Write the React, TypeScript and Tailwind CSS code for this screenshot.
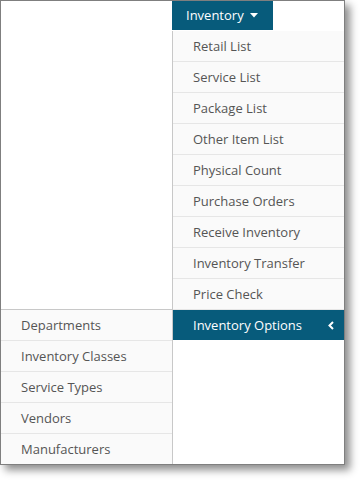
import React from "react";

const items = [
  "Retail List",
  "Service List",
  "Package List",
  "Other Item List",
  "Physical Count",
  "Purchase Orders",
  "Receive Inventory",
  "Inventory Transfer",
  "Price Check",
];

const subItems = ["Departments", "Inventory Classes", "Service Types", "Vendors", "Manufacturers"];

export default function App() {
  return (
    <div className="w-[361px] h-[481px] bg-white" style={{ fontFamily: '"Open Sans", "Liberation Sans", sans-serif' }}>
      <div className="w-[345px] h-[465px] border border-[#7f7f7f] bg-white shadow-[5px_5px_8px_rgba(0,0,0,0.45)] flex flex-col overflow-hidden">
        <div className="h-[30px] shrink-0 flex">
          <div className="w-[171px]" />
          <div className="w-[101px] h-[29px] bg-[#075b7b] text-white text-[13px] flex items-center pl-[14px] gap-[6px]">
            <span>Inventory</span>
            <svg width="8" height="5" viewBox="0 0 8 5">
              <path d="M0 0 L8 0 L4 4.5 Z" fill="white" />
            </svg>
          </div>
        </div>
        <div className="flex h-[433px]">
          <div className="w-[171px] flex flex-col justify-end">
            <div className="border-t border-[#c8c8c8] bg-[#fafafa]">
              {subItems.map((s, i) => (
                <div
                  key={s}
                  className={`h-[30px] box-content flex items-center pl-[20px] text-[13px] leading-none text-[#555] ${i < subItems.length - 1 ? "border-b border-[#e6e6e6]" : ""}`}
                >
                  {s}
                </div>
              ))}
            </div>
          </div>
          <div className="flex-1 border-l border-[#c8c8c8] bg-white">
            {items.map((s) => (
              <div key={s} className="h-[31px] flex items-center pl-[20px] text-[13px] leading-none text-[#555] bg-[#fafafa] border-b border-[#e6e6e6]">
                {s}
              </div>
            ))}
            <div className="h-[30px] flex items-center justify-between pl-[20px] pr-[10px] text-[13px] leading-none text-white bg-[#075b7b]">
              <span>Inventory Options</span>
              <svg width="6" height="9" viewBox="0 0 6 9">
                <path d="M5 1 L1.5 4.5 L5 8" stroke="white" strokeWidth="2" fill="none" />
              </svg>
            </div>
          </div>
        </div>
      </div>
    </div>
  );
}
